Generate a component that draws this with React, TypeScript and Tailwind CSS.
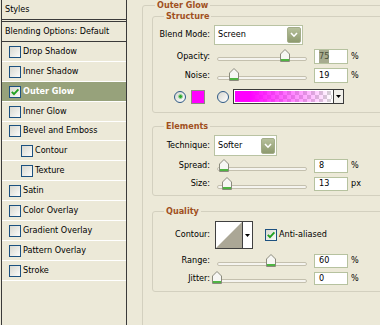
import React from 'react';

type StyleItem = { label: string; checked?: boolean; active?: boolean; indent?: boolean; short?: boolean };

const styleItems: StyleItem[] = [
  { label: 'Drop Shadow' },
  { label: 'Inner Shadow' },
  { label: 'Outer Glow', checked: true, active: true },
  { label: 'Inner Glow' },
  { label: 'Bevel and Emboss', short: true },
  { label: 'Contour', indent: true },
  { label: 'Texture', indent: true },
  { label: 'Satin' },
  { label: 'Color Overlay' },
  { label: 'Gradient Overlay' },
  { label: 'Pattern Overlay' },
  { label: 'Stroke' },
];

const CheckBox: React.FC<{ checked?: boolean }> = ({ checked }) => (
  <span className="flex h-[12px] w-[12px] shrink-0 items-center justify-center border border-[#1c5180] bg-[linear-gradient(135deg,#d8d8d0,#fbfbf9)]">
    {checked && (
      <svg width="10" height="10" viewBox="0 0 10 10">
        <path d="M1.8 4.8 L4 7.2 L8.4 2.4" fill="none" stroke="#21a121" strokeWidth="1.9" />
      </svg>
    )}
  </span>
);

const Radio: React.FC<{ on?: boolean }> = ({ on }) => (
  <span className="flex h-[12px] w-[12px] shrink-0 items-center justify-center rounded-full border border-[#2f5a86] bg-[linear-gradient(135deg,#d6d6ce,#ffffff)]">
    {on && <span className="h-[5px] w-[5px] rounded-full border border-[#9bd89b] bg-[#2fa62f]" />}
  </span>
);

const Chevron = () => (
  <svg width="8" height="6" viewBox="0 0 8 6">
    <path d="M1 1 L4 4.2 L7 1" fill="none" stroke="#ffffff" strokeWidth="1.6" />
  </svg>
);

const DownArrow = () => (
  <svg width="5" height="3" viewBox="0 0 5 3">
    <path d="M0 0 H5 L2.5 3 Z" fill="#000" />
  </svg>
);

const Select: React.FC<{ value: string; className: string }> = ({ value, className }) => (
  <div className={`flex items-center justify-between border border-[#b9c3a3] bg-white pl-[3px] pr-[1px] ${className}`}>
    <span>{value}</span>
    <span className="flex h-[16px] w-[14px] items-center justify-center rounded-[2px] border border-[#a3ad88] bg-[linear-gradient(#b6c09b,#8e9a6f)]">
      <Chevron />
    </span>
  </div>
);

const Slider: React.FC<{ pct: number }> = ({ pct }) => (
  <div className="relative ml-[2px] h-[15px] w-[100px] shrink-0">
    <div className="absolute left-[5px] right-[5px] top-[8px] h-[4px] rounded-full border border-[#c4c0ae] bg-[#f5f4ef]" />
    <svg className="absolute top-0" style={{ left: pct * 0.9 }} width="10" height="13" viewBox="0 0 10 13">
      <polygon points="0.5,5 5,0.5 9.5,5 9.5,12.5 0.5,12.5" fill="#f7f7f4" stroke="#8a8a7c" />
      <rect x="1" y="10" width="8" height="2" fill="#4fb443" />
    </svg>
  </div>
);

const NumBox: React.FC<{ value: string; selected?: boolean }> = ({ value, selected }) => (
  <div className="ml-[2px] flex h-full w-[34px] shrink-0 items-center border border-[#b6c29f] bg-white pl-[4px]">
    {selected ? <span className="bg-[#a6ab8f] text-[#4b4f3a]">{value}</span> : <span>{value}</span>}
  </div>
);

const SliderRow: React.FC<{ label: string; pct: number; value: string; unit: string; selected?: boolean; className: string }> = ({
  label,
  pct,
  value,
  unit,
  selected,
  className,
}) => (
  <div className={`flex items-center ${className}`}>
    <span className="w-[57px] shrink-0 text-right">{label}</span>
    <Slider pct={pct} />
    <NumBox value={value} selected={selected} />
    <span className="ml-[3px]">{unit}</span>
  </div>
);

const Legend: React.FC<{ children: React.ReactNode; className: string }> = ({ children, className }) => (
  <legend className={`px-[2px] text-[9px] font-bold leading-[11px] text-[#a0501e] ${className}`}>{children}</legend>
);

export default function App() {
  return (
    <div className="flex h-[325px] w-[380px] overflow-hidden bg-[#ece9d8] font-['DejaVu_Sans_Condensed','Liberation_Sans',sans-serif] text-[9px] text-black">
      {/* Styles list */}
      <div className="ml-[1px] flex h-full w-[126px] shrink-0 flex-col border-x border-[#3a3a3a]">
        <div className="flex h-[20px] items-center border-b border-[#3a3a3a] pl-[3px]">Styles</div>
        <div className="h-px" />
        <div className="flex h-[21px] items-center border-y border-[#3a3a3a] pl-[3px]">Blending Options: Default</div>
        {styleItems.map((item) => (
          <div
            key={item.label}
            className={`flex items-center gap-[2px] border-b border-white ${item.short ? 'h-[19px]' : 'h-[20px]'} ${
              item.indent ? 'pl-[19px]' : 'pl-[7px]'
            } ${item.active ? 'bg-[#97a27b] font-bold text-white' : ''}`}
          >
            <CheckBox checked={item.checked} />
            <span>{item.label}</span>
          </div>
        ))}
      </div>

      {/* Outer Glow settings */}
      <div className="pl-[15px]">
        <fieldset className="h-[340px] w-[260px] rounded-[3px] border border-[#d3d0bf] pl-[9px]">
          <Legend className="ml-[3px]">Outer Glow</Legend>

          <fieldset className="w-[250px] rounded-[3px] border border-[#d3d0bf] pb-[8px]">
            <Legend className="ml-[11px]">Structure</Legend>
            <div className="mt-[3px] flex h-[20px] items-center">
              <span className="w-[57px] shrink-0 text-right">Blend Mode:</span>
              <Select value="Screen" className="ml-[4px] h-[20px] w-[89px]" />
            </div>
            <SliderRow label="Opacity:" pct={75} value="75" unit="%" selected className="mt-[4px] h-[15px]" />
            <SliderRow label="Noise:" pct={19} value="19" unit="%" className="mt-[4px] h-[15px]" />
            <div className="mt-[6px] flex h-[15px] items-center">
              <span className="ml-[21px]">
                <Radio on />
              </span>
              <span className="ml-[5px] h-[14px] w-[14px] border border-[#8c8c80] bg-[#ff00ff]" />
              <span className="ml-[12px]">
                <Radio />
              </span>
              <div className="ml-[4px] flex h-[15px] border border-[#3a3a3a]">
                <div className="w-[99px] border border-white bg-[conic-gradient(#d4d4d4_25%,#ffffff_0_50%,#d4d4d4_0_75%,#ffffff_0)] bg-[length:8px_8px]">
                  <div className="h-full w-full bg-[linear-gradient(to_right,#ff00ff_15%,rgba(255,0,255,0)_100%)]" />
                </div>
                <div className="flex w-[10px] items-center justify-center border-l border-[#3a3a3a] bg-[#f1f0ea]">
                  <DownArrow />
                </div>
              </div>
            </div>
          </fieldset>

          <fieldset className="mt-[8px] w-[250px] rounded-[3px] border border-[#d3d0bf] pb-[4px]">
            <Legend className="ml-[11px]">Elements</Legend>
            <div className="mt-[3px] flex h-[21px] items-center">
              <span className="w-[57px] shrink-0 text-right">Technique:</span>
              <Select value="Softer" className="ml-[4px] h-[21px] w-[63px]" />
            </div>
            <SliderRow label="Spread:" pct={8} value="8" unit="%" className="mt-[3px] h-[14px]" />
            <SliderRow label="Size:" pct={11} value="13" unit="px" className="mt-[4px] h-[14px]" />
          </fieldset>

          <fieldset className="mt-[10px] w-[250px] rounded-[3px] border border-[#d3d0bf] pb-[6px]">
            <Legend className="ml-[11px]">Quality</Legend>
            <div className="mt-[4px] flex h-[28px] items-center">
              <span className="w-[57px] shrink-0 text-right">Contour:</span>
              <div className="ml-[5px] flex h-[28px] border border-[#404040]">
                <svg width="26" height="26" viewBox="0 0 26 26">
                  <rect width="26" height="26" fill="#ffffff" />
                  <polygon points="0,26 26,0 26,26" fill="#aba796" />
                </svg>
                <div className="flex w-[10px] items-center justify-center border-l border-[#404040] bg-white">
                  <DownArrow />
                </div>
              </div>
              <span className="ml-[12px]">
                <CheckBox checked />
              </span>
              <span className="ml-[2px]">Anti-aliased</span>
            </div>
            <SliderRow label="Range:" pct={60} value="60" unit="%" className="mt-[5px] h-[14px]" />
            <SliderRow label="Jitter:" pct={0} value="0" unit="%" className="mt-[4px] h-[13px]" />
          </fieldset>
        </fieldset>
      </div>
    </div>
  );
}
